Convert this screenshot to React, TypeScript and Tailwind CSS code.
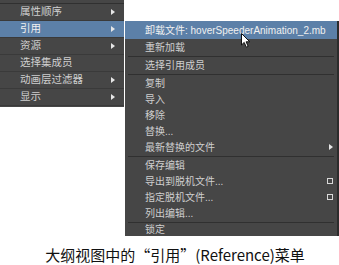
import React from 'react';

type Item =
  | { kind: 'sep' }
  | { kind: 'item'; label: string; arrow?: boolean; box?: boolean; active?: boolean; h: string };

const leftItems = [
  { label: '属性顺序', arrow: true },
  { label: '引用', arrow: true, active: true },
  { label: '资源', arrow: true },
  { label: '选择集成员' },
  { label: '动画层过滤器', arrow: true },
  { label: '显示', arrow: true },
];

const rightItems: Item[] = [
  { kind: 'item', label: '卸载文件: hoverSpeederAnimation_2.mb', active: true, h: 'h-[18px]' },
  { kind: 'item', label: '重新加载', h: 'h-[16px]' },
  { kind: 'sep' },
  { kind: 'item', label: '选择引用成员', h: 'h-[16px]' },
  { kind: 'sep' },
  { kind: 'item', label: '复制', h: 'h-[16px]' },
  { kind: 'item', label: '导入', h: 'h-[16px]' },
  { kind: 'item', label: '移除', h: 'h-[16px]' },
  { kind: 'item', label: '替换...', h: 'h-[16px]' },
  { kind: 'item', label: '最新替换的文件', arrow: true, h: 'h-[16px]' },
  { kind: 'sep' },
  { kind: 'item', label: '保存编辑', h: 'h-[16px]' },
  { kind: 'item', label: '导出到脱机文件...', box: true, h: 'h-[16px]' },
  { kind: 'item', label: '指定脱机文件...', box: true, h: 'h-[16px]' },
  { kind: 'item', label: '列出编辑...', h: 'h-[16px]' },
  { kind: 'sep' },
  { kind: 'item', label: '锁定', h: 'h-[13px]' },
];

const Arrow = () => (
  <svg width="4" height="6" viewBox="0 0 4 6" className="shrink-0">
    <path d="M0 0 L4 3 L0 6 Z" fill="#e6e6e6" />
  </svg>
);

const Cursor = () => (
  <svg width="10" height="16" viewBox="0 0 10 16" className="absolute left-[116px] top-[12px]">
    <path
      d="M0.5 0.5 L0.5 12 L3.2 9.4 L5.3 14.2 L7.2 13.4 L5.1 8.8 L8.8 8.8 Z"
      fill="#ffffff"
      stroke="#111111"
      strokeWidth="1"
      strokeLinejoin="round"
    />
  </svg>
);

export default function App() {
  return (
    <div
      className="w-[339px] h-[265px] bg-white flex flex-col overflow-hidden"
      style={{ fontFamily: '"Liberation Sans", "Noto Sans CJK SC", sans-serif' }}
    >
      <div className="flex items-start">
        {/* Outliner context menu */}
        <div className="w-[124px] shrink-0 h-[107px] bg-[#464646] text-[10.5px] flex flex-col">
          <div className="h-[4px] flex flex-col justify-end">
            <div className="h-px bg-[#303030]" />
          </div>
          {leftItems.map((it, i) => (
            <div
              key={i}
              className={`h-[17px] flex items-center justify-between pl-[20px] pr-[9px] border-b border-[#3a3a3a] ${
                it.active ? 'bg-[#5c80a8] text-[#f0f0f0]' : 'text-[#cfcfcf]'
              }`}
            >
              <span>{it.label}</span>
              {it.arrow && <Arrow />}
            </div>
          ))}
        </div>

        {/* Reference submenu */}
        <div className="relative ml-[1px] mt-[21px] w-[214px] shrink-0 bg-[#464646] border-r-2 border-[#2c2c2c] text-[10px] flex flex-col">
          {rightItems.map((it, i) =>
            it.kind === 'sep' ? (
              <div key={i} className="h-[2px] flex flex-col justify-center px-[3px]">
                <div className="h-px bg-[#303030]" />
              </div>
            ) : (
              <div
                key={i}
                className={`flex items-center justify-between pl-[20px] pr-[4px] ${it.h} ${
                  it.active ? 'bg-[#5c80a8] text-[#f0f0f0]' : 'text-[#cfcfcf]'
                }`}
              >
                <span className="whitespace-nowrap">{it.label}</span>
                {it.arrow && <Arrow />}
                {it.box && <div className="w-[6px] h-[6px] border border-[#d8d8d8]" />}
              </div>
            )
          )}
          <Cursor />
        </div>
      </div>

      <div
        className="mt-[10px] pl-[11px] text-center text-[15px] leading-[18px] text-[#111111]"
        style={{ fontFamily: '"Noto Sans CJK SC", sans-serif' }}
      >
        大纲视图中的“引用”(Reference)菜单
      </div>
    </div>
  );
}
